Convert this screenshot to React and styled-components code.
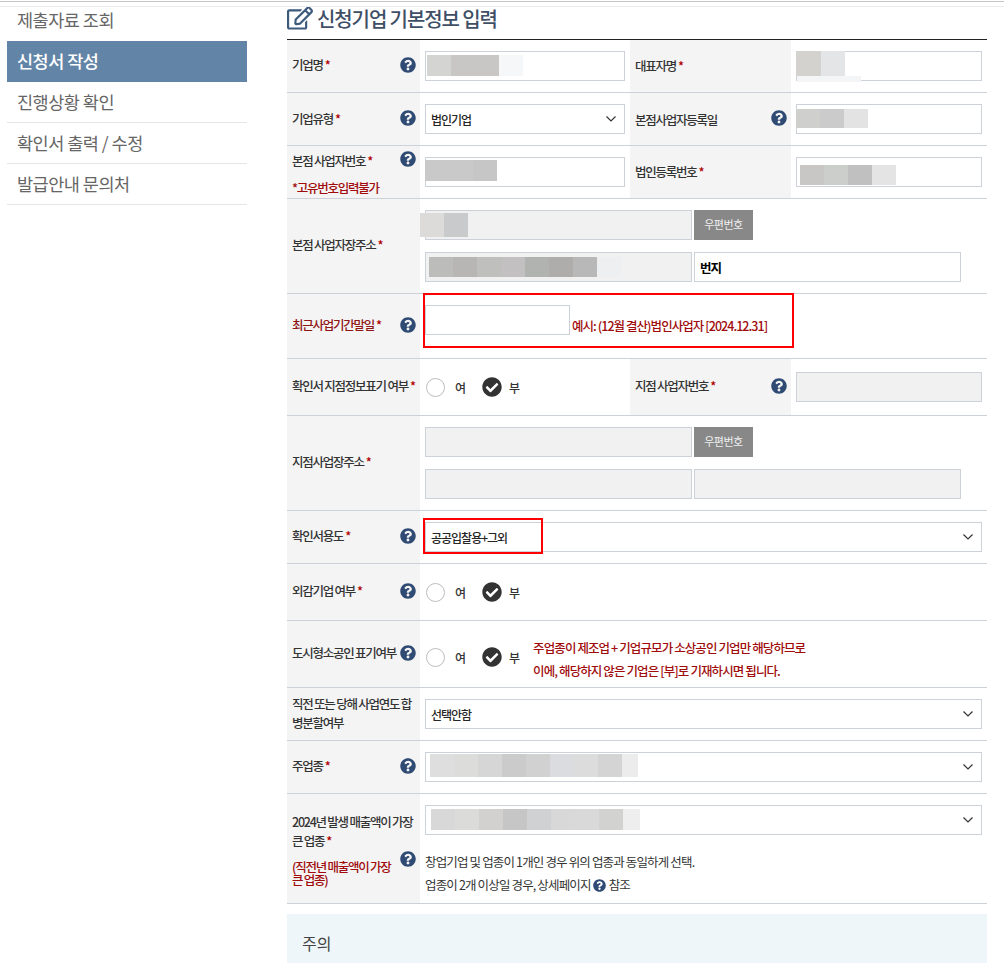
import styled, { createGlobalStyle } from "styled-components";
import { FaCheckCircle, FaQuestionCircle, FaRegEdit } from "react-icons/fa";

const FIELD_BORDER = "#cdd1d9";
const DARK_RED = "#a00c0c";

const GlobalStyle = createGlobalStyle`
  html, body {
    margin: 0;
    padding: 0;
    background: #fff;
    overflow: hidden;
  }
  body {
    font-family: "Noto Sans CJK KR", "Noto Sans", sans-serif;
  }
`;

const Page = styled.div`
  position: relative;
  display: flex;
  gap: 40px;
  height: 963px;
  padding-left: 7px;
  overflow: hidden;
`;

const TopRule = styled.div`
  position: absolute;
  top: 1px;
  left: 0;
  right: 0;
  height: 4px;
  border-top: 1px solid #c6c6c6;
  border-bottom: 1px solid #ececec;
`;

const Sidebar = styled.ul`
  width: 240px;
  margin: 0;
  padding: 0;
  list-style: none;
`;

const MenuItem = styled.li`
  display: flex;
  align-items: center;
  height: 41px;
  box-sizing: border-box;
  padding: 0 0 2px 10px;
  font-size: 17.5px;
  letter-spacing: -0.5px;
  color: ${({ $active }) => ($active ? "#fff" : "#666")};
  font-weight: ${({ $active }) => ($active ? 500 : 400)};
  background: ${({ $active }) => ($active ? "#6285a7" : "transparent")};
  border-bottom: 1px solid ${({ $active, $plain }) => ($active || $plain ? "transparent" : "#e6e6e6")};
`;

const Main = styled.main`
  width: 700px;
`;

const Heading = styled.h2`
  display: flex;
  align-items: center;
  gap: 4px;
  height: 39px;
  margin: 0;
  padding-bottom: 3px;
  box-sizing: border-box;
  font-size: 20px;
  font-weight: 500;
  letter-spacing: -1.1px;
  color: #3e4f66;

  svg {
    width: 26px;
    height: 26px;
    color: #3c5a7c;
  }
`;

const FormTable = styled.div`
  border-top: 1px solid #222;
`;

const Row = styled.div`
  display: grid;
  grid-template-columns: ${({ $full }) => ($full ? "133px 1fr" : "133px 210px 161px 196px")};
  height: ${({ $h }) => $h}px;
  box-sizing: border-box;
  border-bottom: 1px solid ${FIELD_BORDER};
`;

const Head = styled.div`
  display: flex;
  align-items: center;
  padding-left: 5px;
  background: #f4f4f4;
  font-size: 12.5px;
  font-weight: 500;
  line-height: 19px;
  letter-spacing: -1.25px;
  color: ${({ $red }) => ($red ? "#8f1616" : "#333")};
`;

const LabelText = styled.div`
  flex: 1;
  min-width: 0;
  padding-top: ${({ $padTop }) => $padTop}px;
  padding-bottom: ${({ $pad }) => $pad}px;
`;

const Star = styled.span`
  margin-left: 2px;
  color: #b00000;
`;

const SubLabel = styled.div`
  margin-top: ${({ $gap }) => $gap}px;
  padding-right: 20px;
  line-height: ${({ $lh }) => $lh}px;
  color: ${DARK_RED};
`;

const HelpIcon = styled(FaQuestionCircle)`
  flex: none;
  width: 16px;
  height: 16px;
  color: #2f4a73;
  margin: 0 4px 3px 0;
  ${({ $top }) => $top && `align-self: flex-start; margin: ${$top}px 4px 0 -16px;`}
`;

const Cell = styled.div`
  position: relative;
  display: flex;
  flex-direction: column;
  justify-content: ${({ $top }) => ($top ? "flex-start" : "center")};
  gap: 12px;
  padding: ${({ $top }) => ($top ? "11px" : "0")} 5px 0;
  min-width: 0;
`;

const FieldRow = styled.div`
  display: flex;
  align-items: ${({ $end }) => ($end ? "flex-end" : "stretch")};
  gap: 2px;
`;

const Field = styled.div`
  position: relative;
  flex: none;
  width: ${({ $w }) => ($w ? `${$w}px` : "auto")};
  display: flex;
  align-items: center;
  justify-content: space-between;
  height: 30px;
  box-sizing: border-box;
  padding: 0 8px 0 5px;
  border: 1px solid ${FIELD_BORDER};
  background: ${({ $off }) => ($off ? "#f1f1f1" : "#fff")};
  font-size: ${({ $strong }) => ($strong ? "12.5px" : "12px")};
  font-weight: ${({ $strong }) => ($strong ? 700 : 500)};
  letter-spacing: -1px;
  color: ${({ $strong }) => ($strong ? "#000" : "#262626")};
`;

const Mosaic = styled.div`
  position: absolute;
  left: ${({ $x }) => $x}px;
  top: ${({ $y }) => $y}px;
  height: ${({ $h }) => $h}px;
  display: flex;
`;

const MosaicBlock = styled.span`
  display: block;
  width: ${({ $w }) => $w || 24}px;
  background: ${({ $c }) => $c};
`;

const PostButton = styled.button`
  flex: 0 0 59px;
  height: 30px;
  margin: 0;
  padding: 0 0 2px;
  border: 0;
  background: #888;
  color: #f0f0f0;
  font-family: inherit;
  font-size: 11px;
  letter-spacing: -0.5px;
`;

const Hint = styled.div`
  font-size: 12.5px;
  font-weight: 500;
  line-height: 18px;
  letter-spacing: -0.95px;
  color: ${DARK_RED};
`;

const RedBox = styled.div`
  position: absolute;
  left: 3px;
  top: ${({ $top }) => $top}px;
  width: ${({ $w }) => $w}px;
  height: ${({ $h }) => $h}px;
  box-sizing: border-box;
  border: 2px solid #f00;
  pointer-events: none;
`;

const RadioGroup = styled.div`
  display: flex;
  align-items: center;
  padding-left: 1px;
  font-size: 12px;
  font-weight: 500;
  color: #333;
`;

const RadioOff = styled.span`
  display: block;
  width: 19px;
  height: 19px;
  box-sizing: border-box;
  border: 1px solid #bdbdbd;
  border-radius: 50%;
  margin-right: 10px;
`;

const RadioOn = styled(FaCheckCircle)`
  width: 20px;
  height: 20px;
  color: #333;
  margin: 0 7px 0 16px;
`;

const InlineRow = styled.div`
  display: flex;
  align-items: center;
  height: 100%;
  box-sizing: border-box;
  padding-top: 6px;
`;

const RedNote = styled.div`
  margin: 3px 0 0 13px;
  font-size: 12.5px;
  font-weight: 500;
  line-height: 23px;
  letter-spacing: -0.9px;
  color: ${DARK_RED};
`;

const Guide = styled.div`
  margin-top: 3px;
  font-size: 12.5px;
  font-weight: 400;
  line-height: 23px;
  letter-spacing: -0.85px;
  color: #333;

  svg {
    vertical-align: -2px;
    margin: 0 3px 0 2px;
  }
`;

const Notice = styled.div`
  margin-top: 10px;
  padding: 16px 15px;
  height: 120px;
  box-sizing: border-box;
  background: #eef6f9;
  font-size: 16px;
  line-height: 26px;
  color: #444;
`;

const Chevron = () => (
  <svg width="10" height="6" viewBox="0 0 10 6" fill="none" stroke="#333" strokeWidth="1.2">
    <path d="M0.5 0.5 L5 5 L9.5 0.5" />
  </svg>
);

const Label = ({ text, required = true, red, help = true, iconTop, pad = 3, padTop = 0, children }) => (
  <Head $red={red}>
    <LabelText $pad={pad} $padTop={padTop}>
      {text}
      {required && <Star>*</Star>}
      {children}
    </LabelText>
    {help && <HelpIcon $top={iconTop} />}
  </Head>
);

const Blur = ({ x, y, h, blocks }) => (
  <Mosaic $x={x} $y={y} $h={h}>
    {blocks.map(([c, w], i) => (
      <MosaicBlock key={i} $c={c} $w={w} />
    ))}
  </Mosaic>
);

const YesNo = () => (
  <RadioGroup>
    <RadioOff />여
    <RadioOn />부
  </RadioGroup>
);

const Select = ({ text, ...rest }) => (
  <Field {...rest}>
    <span>{text}</span>
    <Chevron />
  </Field>
);

export default function App() {
  return (
    <Page>
      <GlobalStyle />
      <TopRule />
      <Sidebar>
        <MenuItem $plain>제출자료 조회</MenuItem>
        <MenuItem $active>신청서 작성</MenuItem>
        <MenuItem>진행상황 확인</MenuItem>
        <MenuItem>확인서 출력 / 수정</MenuItem>
        <MenuItem>발급안내 문의처</MenuItem>
      </Sidebar>
      <Main>
        <Heading>
          <FaRegEdit />
          신청기업 기본정보 입력
        </Heading>
        <FormTable>
          <Row $h={53}>
            <Label text="기업명" />
            <Cell>
              <Field>
                <Blur x={1} y={3} h={21} blocks={[["#d4d4d3"], ["#c8c7c5", 48], ["#f6f7f9"]]} />
              </Field>
            </Cell>
            <Label text="대표자명" help={false} pad={1} />
            <Cell>
              <Field>
                <Blur x={-1} y={-1} h={25} blocks={[["#d4d2cf", 25], ["#e4e5e7"]]} />
                <Blur x={0} y={24} h={6} blocks={[["#f3f5f7", 64]]} />
              </Field>
            </Cell>
          </Row>
          <Row $h={53}>
            <Label text="기업유형" pad={2} />
            <Cell>
              <Select text="법인기업" />
            </Cell>
            <Label text="본점사업자등록일" required={false} pad={0} />
            <Cell>
              <Field>
                <Blur x={-1} y={4} h={19} blocks={[["#cfcfcd"], ["#cbcbcb"], ["#e3e3e3"]]} />
              </Field>
            </Cell>
          </Row>
          <Row $h={53}>
            <Label text="본점 사업자번호" iconTop={5} pad={0} padTop={4}>
              <SubLabel $gap={8} $lh={19}>*고유번호입력불가</SubLabel>
            </Label>
            <Cell>
              <Field>
                <Blur x={-1} y={2} h={21} blocks={[["#c9c9c9"], ["#c9c9c9"], ["#c5c6c5"]]} />
              </Field>
            </Cell>
            <Label text="법인등록번호" help={false} pad={1} />
            <Cell>
              <Field>
                <Blur x={3} y={7} h={20} blocks={[["#c9c7c6"], ["#cccecc"], ["#c0c0c0"], ["#e3e4e3"]]} />
              </Field>
            </Cell>
          </Row>
          <Row $h={95} $full>
            <Label text="본점 사업자장주소" help={false} />
            <Cell>
              <FieldRow>
                <Field $off $w={267}>
                  <Blur x={-6} y={2} h={24} blocks={[["#dcdbd9"], ["#c9cacc"]]} />
                </Field>
                <PostButton>우편번호</PostButton>
              </FieldRow>
              <FieldRow>
                <Field $off $w={267}>
                  <Blur
                    x={3}
                    y={4}
                    h={20}
                    blocks={[["#bcbcba"], ["#b7b6b4"], ["#bfbfbe"], ["#c2c0c0"], ["#b1b3b1"], ["#aeadac"], ["#b9b8b8"], ["#eeeff1"]]}
                  />
                </Field>
                <Field $w={267} $strong>번지</Field>
              </FieldRow>
            </Cell>
          </Row>
          <Row $h={65} $full>
            <Label text="최근사업기간말일" red />
            <Cell $top>
              <FieldRow $end>
                <Field $w={145} />
                <Hint>예시: (12월 결산)법인사업자 [2024.12.31]</Hint>
              </FieldRow>
              <RedBox $top={-1} $w={371} $h={55} />
            </Cell>
          </Row>
          <Row $h={57}>
            <Label text="확인서 지점정보표기 여부" help={false} />
            <Cell>
              <YesNo />
            </Cell>
            <Label text="지점 사업자번호" />
            <Cell>
              <Field $off />
            </Cell>
          </Row>
          <Row $h={95} $full>
            <Label text="지점사업장주소" help={false} />
            <Cell>
              <FieldRow>
                <Field $off $w={267} />
                <PostButton>우편번호</PostButton>
              </FieldRow>
              <FieldRow>
                <Field $off $w={267} />
                <Field $off $w={267} />
              </FieldRow>
            </Cell>
          </Row>
          <Row $h={53} $full>
            <Label text="확인서용도" />
            <Cell>
              <Select text="공공입찰용+그외" />
              <RedBox $top={7} $w={120} $h={36} />
            </Cell>
          </Row>
          <Row $h={57} $full>
            <Label text="외감기업 여부" />
            <Cell>
              <YesNo />
            </Cell>
          </Row>
          <Row $h={67} $full>
            <Label text="도시형소공인 표기여부" required={false} />
            <Cell>
              <InlineRow>
                <YesNo />
                <RedNote>
                  주업종이 제조업 + 기업규모가 소상공인 기업만 해당하므로
                  <br />
                  이에, 해당하지 않은 기업은 [부]로 기재하시면 됩니다.
                </RedNote>
              </InlineRow>
            </Cell>
          </Row>
          <Row $h={53} $full>
            <Label text="직전 또는 당해 사업연도 합병분할여부" required={false} help={false} />
            <Cell>
              <Select text="선택안함" />
            </Cell>
          </Row>
          <Row $h={53} $full>
            <Label text="주업종" />
            <Cell>
              <Field>
                <span />
                <Chevron />
                <Blur
                  x={4}
                  y={1}
                  h={23}
                  blocks={[["#dedede"], ["#dcdcda"], ["#d6d6d6"], ["#cbcbcb"], ["#d1d1d1"], ["#dbdcdf"], ["#dcdcdc"], ["#d4d4d4"], ["#ececec", 16]]}
                />
              </Field>
            </Cell>
          </Row>
          <Row $h={110} $full>
            <Label text="2024년 발생 매출액이 가장 큰 업종" iconTop={57} pad={0}>
              <SubLabel $gap={10} $lh={13}>(직전년 매출액이 가장 큰 업종)</SubLabel>
            </Label>
            <Cell $top>
              <Field>
                <span />
                <Chevron />
                <Blur
                  x={5}
                  y={3}
                  h={21}
                  blocks={[["#d8d8d8"], ["#dbdbd9"], ["#d2d1cf"], ["#c6c6c6"], ["#d0d1d3"], ["#d8d8d8"], ["#d9d9d9"], ["#d2d2d0"], ["#eeeeee", 17]]}
                />
              </Field>
              <Guide>
                창업기업 및 업종이 1개인 경우 위의 업종과 동일하게 선택.
                <br />
                업종이 2개 이상일 경우, 상세페이지
                <FaQuestionCircle size={13} color="#2f4a73" />
                참조
              </Guide>
            </Cell>
          </Row>
        </FormTable>
        <Notice>주의</Notice>
      </Main>
    </Page>
  );
}
